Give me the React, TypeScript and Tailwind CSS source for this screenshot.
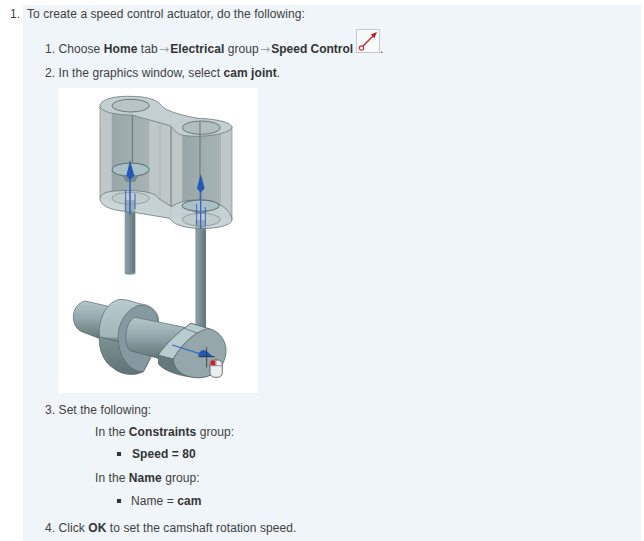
import React from "react";

const Arrow = () => <span className="px-[1.25px] font-['DejaVu_Sans',sans-serif] text-[12px] leading-[12px] text-[#9aa5ab] tracking-normal">→</span>;

const SpeedControlIcon = () => (
  <svg width="24" height="24" viewBox="0 0 24 24" className="inline-block align-baseline ml-[3px]">
    <rect x="0.5" y="0.5" width="23" height="23" fill="#f7f9fb" stroke="#c6c9cb" />
    <path d="M7 17 L18 6" stroke="#c8323c" strokeWidth="1.6" fill="none" />
    <path d="M21 3 L14.8 5.6 L18.4 9.2 Z" fill="#b3202c" />
    <circle cx="5.5" cy="19" r="2.2" fill="#fff" stroke="#c8323c" strokeWidth="1.2" />
  </svg>
);

// cam joint picture, coords taken from the zoomed crops so the scale is 1/3
const CamPicture = () => (
  <svg width="199" height="305" viewBox="0 0 199 305" className="block">
    <defs>
      <linearGradient id="rod" x1="0" x2="1" y1="0" y2="0">
        <stop offset="0" stopColor="#8fa2a6" />
        <stop offset="0.45" stopColor="#7c9196" />
        <stop offset="1" stopColor="#5f7378" />
      </linearGradient>
      <linearGradient id="bore" x1="0" x2="1" y1="0" y2="0">
        <stop offset="0" stopColor="#98a6a8" />
        <stop offset="0.5" stopColor="#a0adaf" />
        <stop offset="1" stopColor="#a8b4b6" />
      </linearGradient>
      <linearGradient id="shaft" x1="0" x2="0" y1="0" y2="1">
        <stop offset="0" stopColor="#b4c8cb" />
        <stop offset="0.45" stopColor="#93a8ac" />
        <stop offset="1" stopColor="#5f7276" />
      </linearGradient>
      <linearGradient id="rim" x1="0" x2="0" y1="0" y2="1">
        <stop offset="0" stopColor="#b8cbce" />
        <stop offset="0.5" stopColor="#a2b6ba" />
        <stop offset="0.52" stopColor="#7d9094" />
        <stop offset="1" stopColor="#5f7276" />
      </linearGradient>
    </defs>

    <g transform="translate(-9 -3) scale(0.3333)">
      {/* rods */}
      <rect x="224" y="340" width="32" height="225" fill="url(#rod)" />
      <rect x="436" y="405" width="32" height="420" fill="url(#rod)" />
      <ellipse cx="240" cy="565" rx="16" ry="4" fill="#7c9196" />
      <ellipse cx="452" cy="825" rx="16" ry="5" fill="#7c9196" />

      {/* walls */}
      <path d="M150 62 L546 125 L546 405 L360 400 L150 340 Z" fill="#b8c3c4" fillOpacity="0.92" />
      <rect x="185" y="70" width="113" height="270" fill="url(#bore)" />
      <rect x="397" y="125" width="116" height="280" fill="url(#bore)" />
      <path d="M330 60 L330 345" stroke="#a2aeb0" strokeWidth="2" fill="none" />
      <path d="M363 125 L363 395" stroke="#5a676a" strokeWidth="2.5" fill="none" />
      <path d="M150 62 L150 340 M546 125 L546 405" stroke="#8a9799" strokeWidth="2.5" fill="none" />

      {/* bottom surface */}
      <path
        d="M150 340 C155 315 205 317 240 317 C285 317 320 325 325 340 L365 365 C385 352 400 345 450 345 C510 345 545 380 546 405 C540 425 490 432 440 430 C395 428 365 415 360 400 L240 380 C190 378 150 365 150 340 Z"
        fill="#c6d1d2"
        fillOpacity="0.92"
        stroke="#6f7c7f"
        strokeWidth="2.5"
      />
      <ellipse cx="242" cy="340" rx="56" ry="18" fill="#bfcbcc" stroke="#7d8a8c" strokeWidth="2" />
      <ellipse cx="454" cy="404" rx="57" ry="19" fill="#bfcbcc" stroke="#7d8a8c" strokeWidth="2" />

      {/* top surface */}
      <path
        d="M150 62 C152 42 195 33 240 34 C285 34 320 42 335 62 C350 80 400 92 445 100 C500 102 546 112 546 128 C535 150 440 160 395 150 C375 145 372 130 360 122 L245 90 C195 90 150 80 150 62 Z"
        fill="#c3cfd0"
        stroke="#6f7c7f"
        strokeWidth="2.5"
      />
      <ellipse cx="242" cy="62" rx="56" ry="19" fill="#b8c4c5" stroke="#5d696c" strokeWidth="2.5" />
      <ellipse cx="454" cy="128" rx="57" ry="20" fill="#b2bebf" stroke="#5d696c" strokeWidth="2.5" />

      {/* center lines */}
      <path d="M247 92 L247 240 M450 110 L450 345" stroke="#5d696c" strokeWidth="2.5" fill="none" />

      {/* pistons */}
      <ellipse cx="242" cy="254" rx="56" ry="20" fill="#a9c0c6" stroke="#5d696c" strokeWidth="3" />
      <path d="M186 258 C200 275 284 275 298 258 C280 268 260 270 256 290 L226 290 C222 270 205 268 186 258 Z" fill="#79888c" />
      <ellipse cx="452" cy="362" rx="56" ry="17" fill="#a9c0c6" stroke="#5d696c" strokeWidth="3" />
      <path d="M396 365 C410 382 494 382 508 365 C490 375 470 378 466 385 L438 385 C434 378 415 375 396 365 Z" fill="#79888c" />

      {/* rods again, seen through the bottom */}
      <rect x="224" y="345" width="32" height="40" fill="#7c9196" fillOpacity="0.5" />
      <rect x="436" y="405" width="32" height="30" fill="#7c9196" fillOpacity="0.5" />

      {/* blue arrows */}
      <g stroke="#3568c8" fill="none">
        <path d="M240 280 L240 388" strokeWidth="5" />
        <path d="M227 316 L227 378 M255 326 L255 372" strokeWidth="3" />
        <path d="M452 320 L452 432" strokeWidth="4" />
        <path d="M440 358 L440 420 M466 366 L466 424" strokeWidth="3" />
      </g>
      <path d="M240 226 L253 272 L240 284 L229 272 Z" fill="#2458b8" />
      <path d="M452 267 L464 310 L452 323 L441 310 Z" fill="#2458b8" />
    </g>

    <g transform="translate(6 202) scale(0.3333)">
      {/* left stub */}
      <path d="M60 33 L135 50 L115 150 L50 125 C15 110 15 45 60 33 Z" fill="url(#shaft)" stroke="#55636a" strokeWidth="2" />

      {/* disc */}
      <path
        d="M165 28 C195 28 215 42 245 45 C270 55 285 75 280 105 C285 145 265 190 235 245 C205 260 170 255 145 235 C115 215 100 180 103 135 C100 85 125 35 165 28 Z"
        fill="url(#rim)"
        stroke="#55636a"
        strokeWidth="2"
      />
      <path d="M103 140 L160 155" stroke="#4d5a5d" strokeWidth="2" fill="none" />
      <path
        d="M222 46 C180 60 155 105 160 155 C165 205 195 245 235 245 C265 190 285 145 280 105 C282 70 255 42 222 46 Z"
        fill="#8799a0"
        stroke="#55636a"
        strokeWidth="2"
      />

      {/* middle shaft */}
      <path d="M210 82 L360 112 L290 208 L195 182 C175 165 178 95 210 82 Z" fill="url(#shaft)" stroke="#55636a" strokeWidth="2" />

      {/* cam lobe */}
      <path
        d="M430 116 C470 125 490 165 478 205 C465 250 425 268 385 262 C345 258 300 245 280 222 L280 195 C300 165 340 125 378 100 Z"
        fill="#65787d"
        stroke="#55636a"
        strokeWidth="2"
      />
      <path d="M378 100 L432 116 L395 130 C365 150 340 180 325 207 L280 195 C300 165 340 125 378 100 Z" fill="#b8cbce" stroke="#55636a" strokeWidth="2" />
      <path d="M355 114 L396 129" stroke="#55636a" strokeWidth="2" fill="none" />
      <path
        d="M432 116 C470 125 492 165 480 205 C465 250 425 268 385 262 C350 258 325 235 325 207 C340 180 365 150 395 130 C410 122 420 116 432 116 Z"
        fill="#96a7ab"
        stroke="#55636a"
        strokeWidth="2"
      />

      {/* blue axis + cursor */}
      <path d="M322 165 L420 196" stroke="#3568c8" strokeWidth="3.5" fill="none" />
      <path d="M400 195 C405 178 420 176 428 186 L445 200 L405 202 Z" fill="#2458b8" />
      <path d="M425 172 L425 232 M400 200 L450 200" stroke="#333" strokeWidth="2.5" fill="none" />
      <rect x="435" y="210" width="37" height="52" rx="14" fill="#e9eef0" stroke="#555" strokeWidth="2.5" />
      <path d="M435 227 L472 227 M453 210 L453 227" stroke="#666" strokeWidth="2" fill="none" />
      <rect x="437" y="212" width="14" height="14" fill="#d0202c" />
    </g>
  </svg>
);

export default function App() {
  return (
    <div className="w-[644px] h-[541px] overflow-hidden bg-white text-[12px] leading-[16px] tracking-[0.07px] text-[#404040] font-['Liberation_Sans',Arial,sans-serif] flex pt-[5px]">
      <div className="w-[23px] shrink-0 pt-[1px] pl-[10px]">1.</div>
      <div className="w-[618px] h-full bg-[#eff5f9] pl-[4px] pt-[1px]">
        <div>To create a speed control actuator, do the following:</div>

        <div className="pl-[18px] [&_b]:text-[#333]">
          <div className="mt-[7px] whitespace-pre">
            <span>1. Choose <b>Home</b> tab<Arrow /><b>Electrical</b> group<Arrow /><b className="tracking-[-0.02px]">Speed Control</b></span>
            <SpeedControlIcon />
            <span>.</span>
          </div>
          <div className="mt-[8px]">2. In the graphics window, select <b>cam joint</b>.</div>

          <div className="mt-[7px] ml-[14px] bg-white w-[199px]">
            <CamPicture />
          </div>

          <div className="mt-[9px]">3. Set the following:</div>
          <div className="pl-[50px]">
            <div className="mt-[6px]">In the <b>Constraints</b> group:</div>
            <div className="mt-[6px] pl-[22px] flex items-center">
              <span className="w-[4px] h-[4px] bg-[#333] mr-[11px]" />
              <b>Speed = 80</b>
            </div>
            <div className="mt-[8px]">In the <b>Name</b> group:</div>
            <div className="mt-[7px] pl-[22px] flex items-center">
              <span className="w-[4px] h-[4px] bg-[#333] mr-[10px]" />
              <span>Name = <b>cam</b></span>
            </div>
          </div>
          <div className="mt-[11px]">4. Click <b>OK</b> to set the camshaft rotation speed.</div>
        </div>
      </div>
    </div>
  );
}
